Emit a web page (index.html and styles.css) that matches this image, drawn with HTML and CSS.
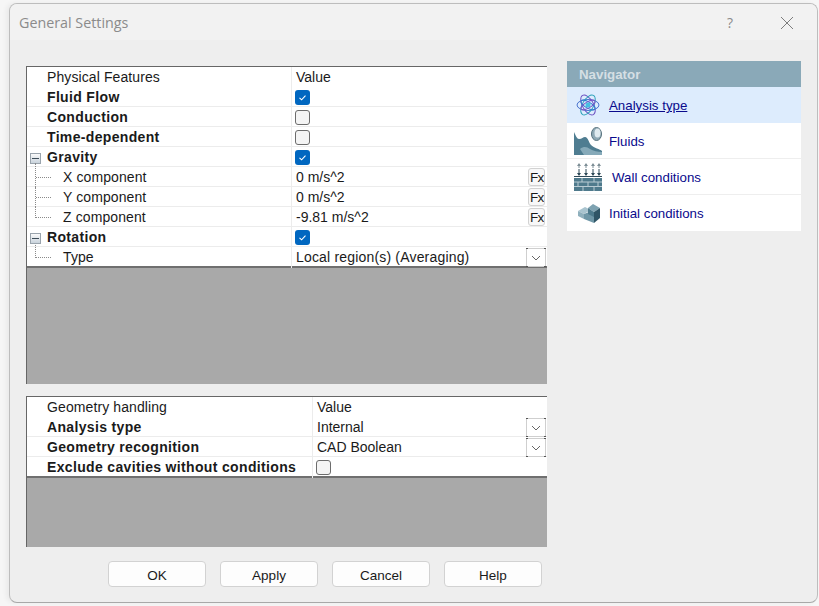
FILE: index.html
```html
<!DOCTYPE html>
<html lang="en">
<head>
<meta charset="utf-8">
<title>General Settings</title>
<link rel="stylesheet" href="styles.css">
</head>
<body>
<div class="window">
  <header class="titlebar">
    <span class="title">General Settings</span>
    <span class="help">?</span>
    <svg class="close" width="14" height="14" viewBox="0 0 14 14"><path d="M1 1 13 13M13 1 1 13" stroke="#7d7d7d" stroke-width="1" fill="none"/></svg>
  </header>
  <div class="main">
    <div class="left">
      <section class="grid grid-top">
        <div class="row head"><div class="name">Physical Features</div><div class="val">Value</div></div>
        <div class="row"><div class="name b">Fluid Flow</div><div class="val"><span class="check on"><svg width="15" height="15" viewBox="0 0 15 15"><path d="M4.5 7.8 6.6 9.8 10.5 5.6" stroke="#fff" stroke-width="1.1" fill="none"/></svg></span></div></div>
        <div class="row"><div class="name b">Conduction</div><div class="val"><span class="check"></span></div></div>
        <div class="row"><div class="name b">Time-dependent</div><div class="val"><span class="check"></span></div></div>
        <div class="row"><div class="name b"><span class="exp"></span>Gravity</div><div class="val"><span class="check on"><svg width="15" height="15" viewBox="0 0 15 15"><path d="M4.5 7.8 6.6 9.8 10.5 5.6" stroke="#fff" stroke-width="1.1" fill="none"/></svg></span></div></div>
        <div class="row"><div class="name child"><span class="tree mid first"></span>X component</div><div class="val">0 m/s^2<span class="fx">Fx</span></div></div>
        <div class="row"><div class="name child"><span class="tree mid"></span>Y component</div><div class="val">0 m/s^2<span class="fx">Fx</span></div></div>
        <div class="row"><div class="name child"><span class="tree end"></span>Z component</div><div class="val">-9.81 m/s^2<span class="fx">Fx</span></div></div>
        <div class="row"><div class="name b"><span class="exp"></span>Rotation</div><div class="val"><span class="check on"><svg width="15" height="15" viewBox="0 0 15 15"><path d="M4.5 7.8 6.6 9.8 10.5 5.6" stroke="#fff" stroke-width="1.1" fill="none"/></svg></span></div></div>
        <div class="row last"><div class="name child"><span class="tree end first"></span>Type</div><div class="val wide">Local region(s) (Averaging)<span class="drop"><svg width="10" height="6" viewBox="0 0 10 6"><path d="M1 1 5 5 9 1" stroke="#666" fill="none"/></svg></span></div></div>
      </section>
      <section class="grid grid-bottom">
        <div class="row head"><div class="name">Geometry handling</div><div class="val">Value</div></div>
        <div class="row"><div class="name b">Analysis type</div><div class="val">Internal<span class="drop"><svg width="10" height="6" viewBox="0 0 10 6"><path d="M1 1 5 5 9 1" stroke="#666" fill="none"/></svg></span></div></div>
        <div class="row"><div class="name b">Geometry recognition</div><div class="val">CAD Boolean<span class="drop"><svg width="10" height="6" viewBox="0 0 10 6"><path d="M1 1 5 5 9 1" stroke="#666" fill="none"/></svg></span></div></div>
        <div class="row last"><div class="name b">Exclude cavities without conditions</div><div class="val"><span class="check"></span></div></div>
      </section>
    </div>
    <nav class="nav">
      <div class="nav-head">Navigator</div>
      <a class="nav-item active">
        <svg class="ic" width="24" height="24" viewBox="0 0 24 24" fill="none">
          <g stroke-width=".9"><ellipse cx="12" cy="12" rx="11" ry="5.500" stroke="#3a66c8"/><ellipse cx="12" cy="12" rx="11" ry="5.500" transform="rotate(60 12 12)" stroke="#6a4fc0"/><ellipse cx="12" cy="12" rx="11" ry="5.500" transform="rotate(120 12 12)" stroke="#2aa0b8"/><ellipse cx="12" cy="12" rx="8" ry="3" transform="rotate(30 12 12)" stroke="#2f7fd0"/><ellipse cx="12" cy="12" rx="8" ry="3" transform="rotate(150 12 12)" stroke="#7a55c8"/></g>
          <circle cx="12" cy="12" r="2.500" fill="#48c0e0"/>
        </svg>
        <span>Analysis type</span>
      </a>
      <a class="nav-item fluids">
        <svg class="ic" width="28" height="28" viewBox="0 0 28 28">
          <path d="M0 5C2 9 3 12 5 12 8 12 9 10 11 10 14 10 15 16 17 18 20 21 26 22 28 24V28H0Z" fill="#4f7d91"/>
          <path d="M6 22C10 19 13 20 16 22 19 24 24 25 28 25V28H10Z" fill="#86aab9"/>
          <ellipse cx="22.500" cy="7" rx="5" ry="6.500" fill="#8fa9b5" stroke="#55707c"/>
          <ellipse cx="23.500" cy="6" rx="3" ry="4.600" fill="#dfeaef"/>
        </svg>
        <span>Fluids</span>
      </a>
      <a class="nav-item wall">
        <svg class="ic" width="28" height="28" viewBox="0 0 28 28">
          <g stroke="#7d8e96" fill="none"><path d="M5 1V5M12 1V5M19 1V5M25 1V5"/></g>
          <g fill="#7d8e96"><path d="M3 3 5 0 7 3ZM10 3 12 0 14 3ZM17 3 19 0 21 3ZM23 3 25 0 27 3Z"/></g>
          <g stroke="#2f4a58" fill="none"><path d="M5 6V12M12 6V12M19 6V12M25 6V12"/></g>
          <g fill="#2f4a58"><path d="M3 10 5 13 7 10ZM10 10 12 13 14 10ZM17 10 19 13 21 10ZM23 10 25 13 27 10Z"/></g>
          <path d="M0 13.500H28" stroke="#2f4a58"/>
          <rect x="0" y="15" width="28" height="13" fill="#4f7a8c"/>
          <path d="M0 19H28M0 23.500H28M8 15V19M20 15V19M4 19V23.500M14 19V23.500M24 19V23.500M9 23.500V28M20 23.500V28" stroke="#b9cbd3" fill="none"/>
        </svg>
        <span>Wall conditions</span>
      </a>
      <a class="nav-item">
        <svg class="ic" width="24" height="24" viewBox="0 0 24 24">
          <path d="M1 10 8 6 14 9 7 13Z" fill="#a9c4cf"/>
          <path d="M1 10 7 13 7 18 1 15Z" fill="#8fb0bd"/>
          <path d="M7 13 12 11 17 14 17 22 7 18Z" fill="#6f97a7"/>
          <path d="M11 7 16 3 23 7 17 11Z" fill="#7ea2b1"/>
          <path d="M11 7 17 11 17 16 11 13Z" fill="#4d7a8c"/>
          <path d="M17 11 23 7 23 17 17 22Z" fill="#2f5566"/>
        </svg>
        <span>Initial conditions</span>
      </a>
    </nav>
  </div>
  <footer class="buttons">
    <button class="btn">OK</button>
    <button class="btn">Apply</button>
    <button class="btn">Cancel</button>
    <button class="btn">Help</button>
  </footer>
</div>
</body>
</html>
```
FILE: styles.css
```css
* { box-sizing: border-box; }
html, body { margin: 0; height: 100%; }
body {
  background: #f6f6f6;
  font-family: "Liberation Sans", Arial, sans-serif;
  font-size: 14px;
  color: #1a1a1a;
  overflow: hidden;
}
.window {
  width: 809px;
  height: 600px;
  margin: 3px 0 0 9px;
  background: #eeeeee;
  border: 1px solid #bdbdbd;
  border-bottom-color: #a8a8a8;
  border-radius: 8px;
  box-shadow: -3px 0 5px rgba(0, 0, 0, .05);
  display: flex;
  flex-direction: column;
  overflow: hidden;
}
.titlebar {
  height: 36px;
  flex: none;
  background: #f2f2f2;
  display: flex;
  align-items: center;
  padding: 0 23px 0 9px;
}
.title { font-family: "Open Sans", sans-serif; font-size: 14.300px; color: #8b8b8b; flex: 1; }
.help { font-family: "Open Sans", sans-serif; font-size: 14px; color: #8b8b8b; margin-right: 47px; }
.close { margin-top: 2px; }
.main { flex: none; display: flex; padding: 21px 0 0 16px; }
.left { width: 521px; margin-top: 5px; display: flex; flex-direction: column; gap: 12px; }
.grid {
  display: flex;
  flex-direction: column;
  background: #a9a9a9;
  border-top: 1px solid #666;
  border-left: 1px solid #666;
}
.grid-top { height: 318px; }
.grid-bottom { height: 151px; }
.row {
  height: 20px;
  flex: none;
  display: grid;
  grid-template-columns: 265px 1fr;
  background: #fff;
  border-bottom: 1px solid #ececec;
  line-height: 21px;
}
.grid-bottom .row { grid-template-columns: 286px 1fr; }
.row.head { border-bottom-color: #fff; }
.row.last { height: 21px; border-bottom: 2px solid #6f6f6f; }
.name {
  display: flex;
  padding-left: 20px;
  border-right: 1px solid #ececec;
  white-space: nowrap;
  letter-spacing: .1px;
}
.name.b { font-weight: 700; letter-spacing: .34px; }
.name.child { padding-left: 36px; }
.val { display: flex; align-items: center; padding-left: 4px; white-space: nowrap; }
.val.wide { letter-spacing: .18px; }
.exp {
  width: 11px;
  height: 11px;
  margin: 6px 6px 0 -17px;
  flex: none;
  background: linear-gradient(#fafafa, #c9d3dc);
  border: 1px solid #9aa4ad;
  position: relative;
}
.exp::after {
  content: "";
  position: absolute;
  left: 1px; right: 1px; top: 4px;
  height: 1px;
  background: #3d4c58;
}
.tree {
  width: 16px;
  flex: none;
  margin-left: -28px;
  margin-right: 12px;
  height: 11px;
  border-left: 1px dotted #8a8a8a;
  border-bottom: 1px dotted #8a8a8a;
}
.tree.first { margin-top: -4px; height: 15px; }
.tree.mid { height: 20px; border-bottom: 0; position: relative; }
.tree.mid.first { height: 24px; }
.tree.mid::after {
  content: "";
  position: absolute;
  left: 0; top: 10px;
  width: 15px;
  border-bottom: 1px dotted #8a8a8a;
}
.tree.mid.first::after { top: 14px; }
.check {
  width: 15px;
  height: 15px;
  flex: none;
  margin: -1px 0 0 -1px;
  border: 1px solid #6c6c6c;
  border-radius: 3px;
  background: #f4f4f4;
}
.check.on { background: #0067c0; border: 0; display: block; }
.check svg { display: block; }
.fx {
  margin: -1px 2px 0 auto;
  width: 17px;
  height: 18px;
  border: 1px solid #d2d2d2;
  border-radius: 3px;
  background: #f8f8f8;
  font-size: 13.500px;
  line-height: 18px;
  letter-spacing: -.8px;
  text-align: left;
  padding-left: 1px;
  overflow: hidden;
}
.drop {
  margin-left: auto;
  margin-right: 1px;
  width: 20px;
  height: 19px;
  background:
    linear-gradient(#555, #555) 0 0 / 2px 1px no-repeat,
    linear-gradient(#555, #555) 100% 0 / 2px 1px no-repeat,
    linear-gradient(#555, #555) 0 100% / 2px 1px no-repeat,
    linear-gradient(#555, #555) 100% 100% / 2px 1px no-repeat,
    linear-gradient(#cfcfcf, #cfcfcf) 0 0 / 100% 1px no-repeat,
    linear-gradient(#cfcfcf, #cfcfcf) 0 100% / 100% 1px no-repeat,
    linear-gradient(#cfcfcf, #cfcfcf) 0 0 / 1px 100% no-repeat,
    linear-gradient(#cfcfcf, #cfcfcf) 100% 0 / 1px 100% no-repeat,
    #fff;
  display: flex;
  align-items: center;
  justify-content: center;
}
.nav { width: 234px; margin-left: 20px; background: #fff; align-self: flex-start; }
.nav-head {
  height: 26px;
  background: #8aa9b8;
  color: #d5dfe4;
  font-weight: 700;
  font-size: 13.300px;
  line-height: 27px;
  padding-left: 12px;
}
.nav-item {
  height: 36px;
  display: flex;
  align-items: center;
  gap: 8px;
  padding-left: 10px;
  color: #0a0a8c;
  font-size: 13.300px;
  border-bottom: 1px solid #eeeeee;
}
.nav-item span { padding-top: 1px; }
.nav-item:last-child { border-bottom: 0; }
.nav-item.active { background: #ddecfd; border-bottom: 0; padding-left: 9px; gap: 9px; }
.nav-item.active span { text-decoration: underline; }
.ic { flex: none; }
.fluids { padding-left: 7px; gap: 7px; }
.wall { padding-left: 7px; gap: 10px; }
.buttons { display: flex; gap: 14px; padding: 14px 0 0 98px; }
.btn {
  width: 98px;
  height: 26px;
  background: #fdfdfd;
  border: 1px solid #d2d2d2;
  border-radius: 4px;
  font-family: "Liberation Sans", Arial, sans-serif;
  font-size: 13.500px;
  color: #1a1a1a;
  padding: 3px 0 0;
}
```
